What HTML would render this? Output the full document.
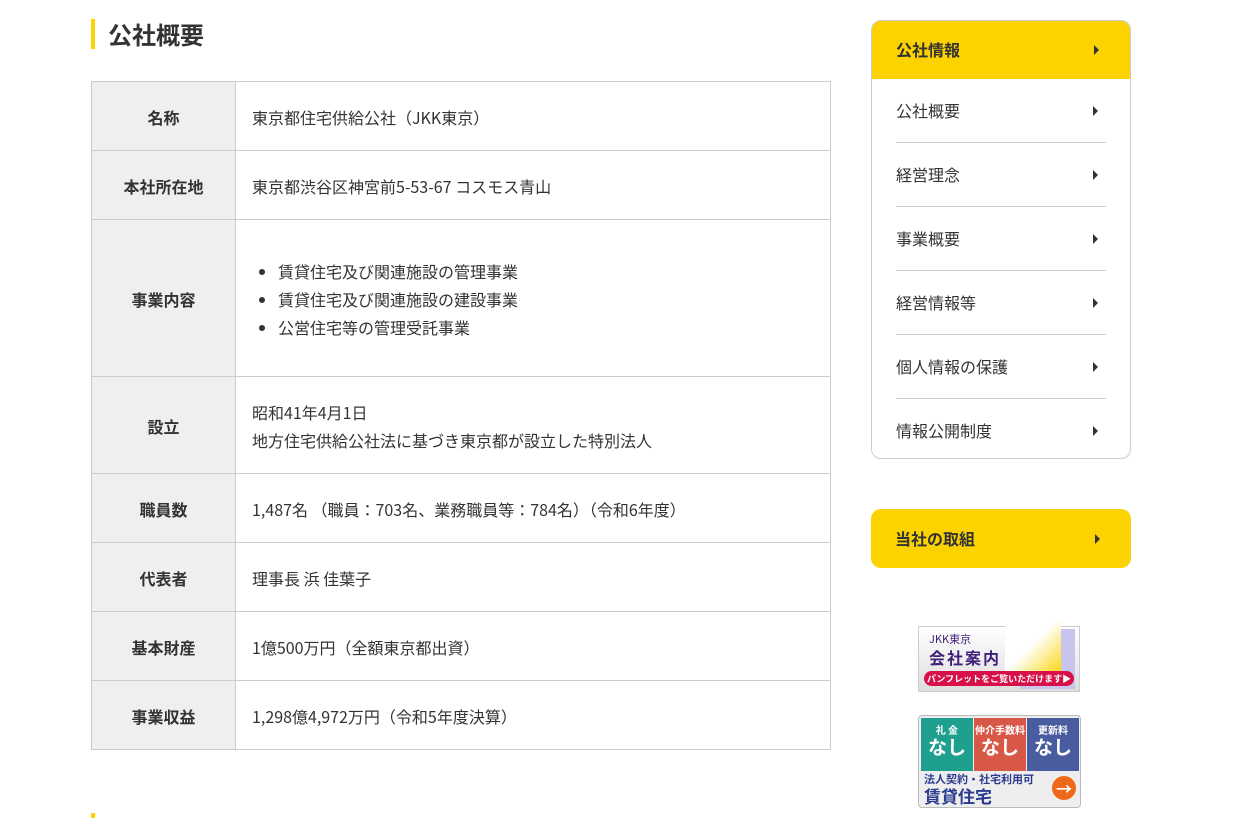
<!DOCTYPE html><html><head><meta charset="utf-8"><style>
body{margin:0;width:1235px;height:818px;overflow:hidden;background:#fff;font-family:"Noto Sans CJK JP","Liberation Sans",sans-serif;color:#333;position:relative}
h1{position:absolute;left:91px;top:19px;margin:0;border-left:4px solid #fcd200;padding-left:13px;font-size:24px;line-height:30px;font-weight:700;color:#333}
table{position:absolute;left:91px;top:81px;width:740px;border-collapse:collapse;font-size:16px}
td{border:1px solid #ccc;padding:1px 16px 0;line-height:28px}
td.h{width:111px;background:#efefef;font-weight:700;text-align:center}
ul{margin:0;padding-left:26px}
.side{position:absolute;left:871px;top:20px;width:258px;height:437px;border:1px solid #ccc;border-radius:10px;overflow:hidden}
.hd{background:#fcd200;height:58px;line-height:57px;padding-left:24px;font-weight:700;font-size:16px;position:relative}
.it{margin:0 24px;height:63px;line-height:63px;border-bottom:1px solid #ccc;font-size:16px;position:relative}
.it:last-child{border-bottom:none}
.ar{position:absolute;right:8px;top:50%;margin-top:-5px;width:0;height:0;border-left:5px solid #333;border-top:5px solid transparent;border-bottom:5px solid transparent}
.hd .ar{right:31px}
.b2{position:absolute;left:871px;top:509px;width:260px;height:59px;border-radius:10px;background:#fcd200;line-height:58px;font-weight:700;font-size:16px;padding-left:24px;box-sizing:border-box}
.b2 .ar{right:31px}
</style></head><body>
<h1>公社概要</h1>
<table>
<tr style="height:69px"><td class="h">名称</td><td>東京都住宅供給公社（JKK東京）</td></tr>
<tr style="height:69px"><td class="h">本社所在地</td><td>東京都渋谷区神宮前5-53-67 コスモス青山</td></tr>
<tr style="height:157px"><td class="h">事業内容</td><td><ul><li>賃貸住宅及び関連施設の管理事業</li><li>賃貸住宅及び関連施設の建設事業</li><li>公営住宅等の管理受託事業</li></ul></td></tr>
<tr style="height:97px"><td class="h">設立</td><td>昭和41年4月1日<br>地方住宅供給公社法に基づき東京都が設立した特別法人</td></tr>
<tr style="height:69px"><td class="h">職員数</td><td>1,487名 （職員：703名、業務職員等：784名）（令和6年度）</td></tr>
<tr style="height:69px"><td class="h">代表者</td><td>理事長 浜 佳葉子</td></tr>
<tr style="height:69px"><td class="h">基本財産</td><td>1億500万円（全額東京都出資）</td></tr>
<tr style="height:69px"><td class="h">事業収益</td><td>1,298億4,972万円（令和5年度決算）</td></tr>
</table>
<div style="position:absolute;left:91px;top:813px;width:4px;height:5px;background:#fcd200"></div>
<div class="side"><div class="hd">公社情報<span class="ar"></span></div>
<div class="it">公社概要<span class="ar"></span></div>
<div class="it">経営理念<span class="ar"></span></div>
<div class="it">事業概要<span class="ar"></span></div>
<div class="it">経営情報等<span class="ar"></span></div>
<div class="it">個人情報の保護<span class="ar"></span></div>
<div class="it">情報公開制度<span class="ar"></span></div>
</div>
<div class="b2">当社の取組<span class="ar"></span></div>
<div style="position:absolute;left:918px;top:626px;width:162px;height:66px;background:linear-gradient(#fff,#ddd);border:1px solid #ccc;box-sizing:border-box">
<div style="position:absolute;right:4px;top:2px;width:55px;height:60px;background:#c8c4ee"></div>
<div style="position:absolute;right:18px;top:-6px;width:56px;height:56px;background:linear-gradient(135deg,#fff 45%,#fcd200)"></div>
<div style="position:absolute;left:10px;top:4px;font-size:11px;color:#40207a">JKK東京</div>
<div style="position:absolute;left:10px;top:18px;font-size:16px;font-weight:700;color:#40207a;letter-spacing:2px">会社案内</div>
<div style="position:absolute;left:5px;top:44px;width:150px;height:15px;border-radius:8px;background:#d8104a;color:#fff;font-size:9px;line-height:15px;text-align:center;font-weight:700">パンフレットをご覧いただけます▶</div></div>
<div style="position:absolute;left:918px;top:715px;width:163px;height:93px;background:#eee;border:1px solid #bbb;border-radius:4px;box-sizing:border-box;overflow:hidden">
<div style="position:absolute;left:2px;top:2px;width:52px;height:53px;background:#1fa08e;color:#fff;text-align:center;font-weight:700;line-height:1.2"><div style="font-size:10px;margin-top:6px">礼 金</div><div style="font-size:19px">なし</div></div>
<div style="position:absolute;left:55px;top:2px;width:52px;height:53px;background:#d85848;color:#fff;text-align:center;font-weight:700;line-height:1.2"><div style="font-size:10px;margin-top:6px">仲介手数料</div><div style="font-size:19px">なし</div></div>
<div style="position:absolute;left:108px;top:2px;width:52px;height:53px;background:#4a5ca0;color:#fff;text-align:center;font-weight:700;line-height:1.2"><div style="font-size:10px;margin-top:6px">更新料</div><div style="font-size:19px">なし</div></div>
<div style="position:absolute;left:5px;top:56px;font-size:11px;font-weight:700;color:#2a3a90;line-height:14px">法人契約・社宅利用可</div>
<div style="position:absolute;left:5px;top:70px;font-size:17px;font-weight:700;color:#2a3a90;line-height:20px">賃貸住宅</div>
<div style="position:absolute;left:133px;top:60px;width:24px;height:24px;border-radius:50%;background:#ee6a1a;color:#fff;text-align:center;line-height:24px;font-weight:700">→</div></div>
</body></html>
